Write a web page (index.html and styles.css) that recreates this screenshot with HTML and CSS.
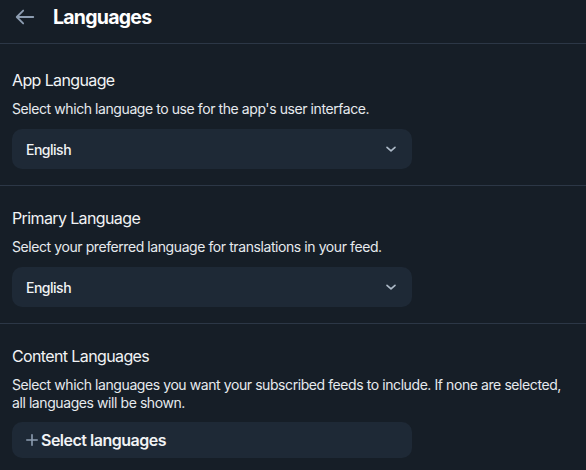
FILE: index.html
```html
<!DOCTYPE html>
<html lang="en">
<head>
<meta charset="utf-8">
<title>Languages</title>
<link rel="stylesheet" href="styles.css">
</head>
<body>
<div class="page">
  <header class="header">
    <button class="back" aria-label="Back">
      <svg width="22" height="22" viewBox="0 0 24 24" fill="none" stroke="currentColor" stroke-width="2" stroke-linecap="round" stroke-linejoin="round"><path d="M21 12H3.5M10 5l-7 7 7 7"/></svg>
    </button>
    <h1 class="title">Languages</h1>
  </header>

  <section class="section section-first">
    <h2 class="heading">App Language</h2>
    <p class="desc">Select which language to use for the app's user interface.</p>
    <div class="select">
      <span class="select-value">English</span>
      <svg class="chev" width="12" height="12" viewBox="0 0 12 12" fill="none" stroke="currentColor" stroke-width="1.6" stroke-linecap="round" stroke-linejoin="round"><path d="M2 4.3l4 3.6 4-3.6"/></svg>
    </div>
  </section>

  <section class="section">
    <h2 class="heading">Primary Language</h2>
    <p class="desc">Select your preferred language for translations in your feed.</p>
    <div class="select">
      <span class="select-value">English</span>
      <svg class="chev" width="12" height="12" viewBox="0 0 12 12" fill="none" stroke="currentColor" stroke-width="1.6" stroke-linecap="round" stroke-linejoin="round"><path d="M2 4.3l4 3.6 4-3.6"/></svg>
    </div>
  </section>

  <section class="section section-last">
    <h2 class="heading">Content Languages</h2>
    <p class="desc">Select which languages you want your subscribed feeds to include. If none are selected, all languages will be shown.</p>
    <button class="add">
      <svg class="plus" width="12" height="12" viewBox="0 0 12 12" fill="none" stroke="currentColor" stroke-width="1.6" stroke-linecap="round"><path d="M6 0.8v10.4M0.8 6h10.4"/></svg>
      <span>Select languages</span>
    </button>
  </section>
</div>
</body>
</html>
```

FILE: styles.css
```css
html, body {
  margin: 0;
  padding: 0;
  background: #161e27;
}
body {
  font-family: Inter, "Noto Sans", sans-serif;
  color: #f1f3f5;
  width: 586px;
  height: 470px;
  overflow: hidden;
}
.page {
  display: flex;
  flex-direction: column;
}
.header {
  height: 43px;
  border-bottom: 1px solid #2c3746;
  display: flex;
  align-items: center;
  padding: 0 14px;
  gap: 17px;
  box-sizing: content-box;
  margin-top: -8px;
  padding-top: 8px;
}
.back {
  background: none;
  border: 0;
  padding: 0;
  color: #8d9db1;
  display: flex;
  align-items: center;
  cursor: pointer;
  margin-top: -9px;
}
.title {
  margin: -9px 0 0;
  font-size: 19.5px;
  font-weight: 700;
  color: #ffffff;
  letter-spacing: -0.75px;
}
.section {
  padding: 20px 12px 16px;
  border-bottom: 1px solid #2c3746;
  display: flex;
  flex-direction: column;
}
.section-first {
  padding-top: 24px;
}
.section-last {
  border-bottom: 0;
}
.heading {
  margin: 0;
  font-size: 16px;
  line-height: 24px;
  font-weight: 400;
  color: #f1f3f5;
  letter-spacing: -0.62px;
}
.desc {
  margin: 8px 0 0;
  font-size: 14px;
  line-height: 18px;
  color: #e6eaee;
  letter-spacing: -0.42px;
}
.select {
  margin-top: 11px;
  width: 400px;
  height: 40px;
  box-sizing: border-box;
  background: #1e2936;
  border-radius: 10px;
  display: flex;
  align-items: center;
  justify-content: space-between;
  padding: 0 15px 0 14px;
}
.select-value {
  font-size: 14px;
  font-weight: 500;
  color: #f1f3f5;
  letter-spacing: -0.5px;
}
.chev {
  color: #aebbc9;
}
.add {
  margin-top: 10px;
  width: 400px;
  height: 36px;
  box-sizing: border-box;
  background: #1e2936;
  border: 0;
  border-radius: 10px;
  display: flex;
  align-items: center;
  gap: 3px;
  padding: 0 14px;
  font-family: inherit;
  font-size: 16px;
  font-weight: 600;
  color: #f1f3f5;
  cursor: pointer;
  letter-spacing: -0.5px;
}
.plus {
  color: #8d9db1;
}
```
